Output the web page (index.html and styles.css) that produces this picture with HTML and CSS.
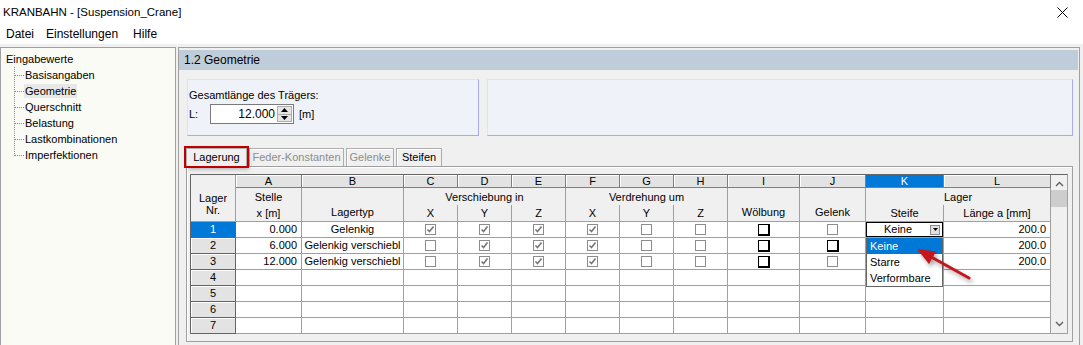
FILE: index.html
```html
<!DOCTYPE html>
<html lang="de">
<head>
  <meta charset="UTF-8" />
  <title>KRANBAHN - [Suspension_Crane]</title>
  <link rel="stylesheet" href="styles.css">
</head>
<body>
  <div class="titlebar">
    <span>KRANBAHN - [Suspension_Crane]</span>
    <svg class="close" width="11" height="11" viewBox="0 0 11 11"><path d="M0.5 0.5 L10.5 10.5 M10.5 0.5 L0.5 10.5" stroke="#000" stroke-width="1"/></svg>
  </div>
  <div class="menubar">
    <span>Datei</span>
    <span>Einstellungen</span>
    <span class="last">Hilfe</span>
  </div>

  <div class="main">
    <aside class="nav">
      <div class="tree-root">Eingabewerte</div>
      <ul class="tree">
        <li>Basisangaben</li>
        <li><span class="sel">Geometrie</span></li>
        <li>Querschnitt</li>
        <li>Belastung</li>
        <li>Lastkombinationen</li>
        <li>Imperfektionen</li>
      </ul>
    </aside>

    <section class="page">
      <div class="page-title">1.2 Geometrie</div>

      <div class="groups">
        <div class="group group-len">
          <div>Gesamtlänge des Trägers:</div>
          <div class="len-row">
            <span class="len-label">L:</span>
            <div class="spin">
              <span class="spin-val">12.000</span>
              <div class="spin-btns">
                <span class="sb"><svg width="7" height="4" viewBox="0 0 7 4"><path d="M0 4 L3.5 0 L7 4 Z" fill="#000"/></svg></span>
                <span class="sb"><svg width="7" height="4" viewBox="0 0 7 4"><path d="M0 0 L3.5 4 L7 0 Z" fill="#000"/></svg></span>
              </div>
            </div>
            <span>[m]</span>
          </div>
        </div>
        <div class="group group-info"></div>
      </div>

      <div class="tabs">
        <div class="tab active">Lagerung</div>
        <div class="tab disabled feder">Feder-Konstanten</div>
        <div class="tab disabled gelenke">Gelenke</div>
        <div class="tab steifen">Steifen</div>
      </div>

      <div class="tab-panel">
        <div class="sheet">
          <div class="grid">
            <!-- header -->
            <div class="c corner">Lager<br>Nr.</div>
            <div class="c let">A</div>
            <div class="c let">B</div>
            <div class="c let">C</div>
            <div class="c let">D</div>
            <div class="c let">E</div>
            <div class="c let">F</div>
            <div class="c let">G</div>
            <div class="c let">H</div>
            <div class="c let">I</div>
            <div class="c let">J</div>
            <div class="c let sel">K</div>
            <div class="c let">L</div>

            <div class="c hd open">Stelle</div>
            <div class="c hd tall">Lagertyp</div>
            <div class="c hd open span3">Verschiebung in</div>
            <div class="c hd open span3">Verdrehung um</div>
            <div class="c hd tall">Wölbung</div>
            <div class="c hd tall">Gelenk</div>
            <div class="c hd open span2">Lager</div>

            <div class="c hd">x [m]</div>
            <div class="c hd">X</div>
            <div class="c hd">Y</div>
            <div class="c hd">Z</div>
            <div class="c hd">X</div>
            <div class="c hd">Y</div>
            <div class="c hd">Z</div>
            <div class="c hd">Steife</div>
            <div class="c hd">Länge a [mm]</div>

            <!-- row 1 -->
            <div class="c rh sel">1</div>
            <div class="c num">0.000</div>
            <div class="c mid">Gelenkig</div>
            <div class="c mid"><span class="cb"><svg viewBox="0 0 9 9"><path d="M1.5 4.5 L3.5 6.5 L7.5 1.5" /></svg></span></div>
            <div class="c mid"><span class="cb"><svg viewBox="0 0 9 9"><path d="M1.5 4.5 L3.5 6.5 L7.5 1.5" /></svg></span></div>
            <div class="c mid"><span class="cb"><svg viewBox="0 0 9 9"><path d="M1.5 4.5 L3.5 6.5 L7.5 1.5" /></svg></span></div>
            <div class="c mid"><span class="cb"><svg viewBox="0 0 9 9"><path d="M1.5 4.5 L3.5 6.5 L7.5 1.5" /></svg></span></div>
            <div class="c mid"><span class="cb"></span></div>
            <div class="c mid"><span class="cb"></span></div>
            <div class="c mid"><span class="cb bold"></span></div>
            <div class="c mid"><span class="cb"></span></div>
            <div class="c combo">
              <span class="combo-val">Keine</span>
              <span class="combo-btn"><svg width="5" height="3" viewBox="0 0 5 3"><path d="M0 0 L5 0 L2.5 3 Z" fill="#000"/></svg></span>
            </div>
            <div class="c num">200.0</div>

            <!-- row 2 -->
            <div class="c rh">2</div>
            <div class="c num">6.000</div>
            <div class="c mid">Gelenkig verschiebl</div>
            <div class="c mid"><span class="cb"></span></div>
            <div class="c mid"><span class="cb"><svg viewBox="0 0 9 9"><path d="M1.5 4.5 L3.5 6.5 L7.5 1.5" /></svg></span></div>
            <div class="c mid"><span class="cb"><svg viewBox="0 0 9 9"><path d="M1.5 4.5 L3.5 6.5 L7.5 1.5" /></svg></span></div>
            <div class="c mid"><span class="cb"><svg viewBox="0 0 9 9"><path d="M1.5 4.5 L3.5 6.5 L7.5 1.5" /></svg></span></div>
            <div class="c mid"><span class="cb"></span></div>
            <div class="c mid"><span class="cb"></span></div>
            <div class="c mid"><span class="cb bold"></span></div>
            <div class="c mid"><span class="cb bold"></span></div>
            <div class="c"></div>
            <div class="c num">200.0</div>

            <!-- row 3 -->
            <div class="c rh">3</div>
            <div class="c num">12.000</div>
            <div class="c mid">Gelenkig verschiebl</div>
            <div class="c mid"><span class="cb"></span></div>
            <div class="c mid"><span class="cb"><svg viewBox="0 0 9 9"><path d="M1.5 4.5 L3.5 6.5 L7.5 1.5" /></svg></span></div>
            <div class="c mid"><span class="cb"><svg viewBox="0 0 9 9"><path d="M1.5 4.5 L3.5 6.5 L7.5 1.5" /></svg></span></div>
            <div class="c mid"><span class="cb"><svg viewBox="0 0 9 9"><path d="M1.5 4.5 L3.5 6.5 L7.5 1.5" /></svg></span></div>
            <div class="c mid"><span class="cb"></span></div>
            <div class="c mid"><span class="cb"></span></div>
            <div class="c mid"><span class="cb bold"></span></div>
            <div class="c mid"><span class="cb"></span></div>
            <div class="c"></div>
            <div class="c num">200.0</div>

            <!-- empty rows -->
            <div class="c rh">4</div>
            <div class="c"></div><div class="c"></div><div class="c"></div><div class="c"></div><div class="c"></div><div class="c"></div>
            <div class="c"></div><div class="c"></div><div class="c"></div><div class="c"></div><div class="c"></div><div class="c"></div>
            <div class="c rh">5</div>
            <div class="c"></div><div class="c"></div><div class="c"></div><div class="c"></div><div class="c"></div><div class="c"></div>
            <div class="c"></div><div class="c"></div><div class="c"></div><div class="c"></div><div class="c"></div><div class="c"></div>
            <div class="c rh">6</div>
            <div class="c"></div><div class="c"></div><div class="c"></div><div class="c"></div><div class="c"></div><div class="c"></div>
            <div class="c"></div><div class="c"></div><div class="c"></div><div class="c"></div><div class="c"></div><div class="c"></div>
            <div class="c rh">7</div>
            <div class="c"></div><div class="c"></div><div class="c"></div><div class="c"></div><div class="c"></div><div class="c"></div>
            <div class="c"></div><div class="c"></div><div class="c"></div><div class="c"></div><div class="c"></div><div class="c"></div>
          </div>

          <div class="vscroll">
            <svg class="sarrow" width="9" height="6" viewBox="0 0 9 6"><path d="M1 5 L4.5 1.5 L8 5" fill="none" stroke="#606060" stroke-width="1.4"/></svg>
            <div class="thumb"></div>
            <div class="track"></div>
            <svg class="sarrow" width="9" height="6" viewBox="0 0 9 6"><path d="M1 1 L4.5 4.5 L8 1" fill="none" stroke="#606060" stroke-width="1.4"/></svg>
          </div>

          <ul class="droplist">
            <li class="hl">Keine</li>
            <li>Starre</li>
            <li>Verformbare</li>
          </ul>

          <svg class="pointer" width="70" height="45" viewBox="0 0 70 45">
            <line x1="60" y1="38" x2="24" y2="18" stroke="#c4161c" stroke-width="3" stroke-linecap="round"/>
            <path d="M8 9 L27 11.5 L20 24 Z" fill="#c4161c"/>
          </svg>
        </div>
      </div>
    </section>
  </div>
</body>
</html>
```

FILE: styles.css
```css
* {
  box-sizing: border-box;
  margin: 0;
  padding: 0;
}

body {
  width: 1083px;
  height: 345px;
  overflow: hidden;
  background: #f0f0f0;
  font-family: 'Liberation Sans', Arial, sans-serif;
  font-size: 11px;
  color: #000;
}

.titlebar {
  height: 24px;
  background: #fff;
  display: flex;
  align-items: center;
  justify-content: space-between;
  padding: 0 15px 0 3px;
  font-size: 11.5px;
}

.menubar {
  height: 20px;
  background: #fff;
  display: flex;
  align-items: center;
  gap: 12px;
  padding-left: 6px;
  font-size: 12px;
}

.menubar .last {
  margin-left: 3px;
}

.main {
  display: flex;
  height: 301px;
  padding-top: 3px;
}

/* left tree */
.nav {
  width: 176px;
  background: #fbfbf5;
  border: 1px solid #a0a0a0;
  border-bottom: none;
  padding-top: 3px;
}

.tree-root {
  height: 16px;
  line-height: 16px;
  padding-left: 5px;
}

.tree {
  list-style: none;
}

.tree li {
  height: 16px;
  line-height: 16px;
  margin-left: 13px;
  padding-left: 11px;
  white-space: nowrap;
  background:
    repeating-linear-gradient(to bottom, #8a8a8a 0 1px, transparent 1px 2px) 0 0 / 1px 100% no-repeat,
    repeating-linear-gradient(to right, #8a8a8a 0 1px, transparent 1px 2px) 1px 8px / 10px 1px no-repeat;
}

.tree li:last-child {
  background:
    repeating-linear-gradient(to bottom, #8a8a8a 0 1px, transparent 1px 2px) 0 0 / 1px 9px no-repeat,
    repeating-linear-gradient(to right, #8a8a8a 0 1px, transparent 1px 2px) 1px 8px / 10px 1px no-repeat;
}

.tree .sel {
  background: #e8e8e8;
  padding: 1px 1px;
  margin-left: -1px;
}

/* right page */
.page {
  flex: 1;
  margin-left: 2px;
  margin-right: 3px;
  border: 1px solid #a0a0a0;
  border-bottom: none;
  padding: 2px 1px 0 0;
  display: flex;
  flex-direction: column;
}

.page-title {
  height: 20px;
  line-height: 20px;
  background: #bfcddb;
  padding-left: 5px;
  font-size: 12px;
}

.groups {
  display: flex;
  gap: 8px;
  margin: 9px 5px 0 8px;
  height: 57px;
}

.group {
  background: #eff3f9;
  border: 1px solid #dde4f0;
  border-right-color: #a9a9ec;
  border-bottom-color: #a9a9ec;
}

.group-len {
  width: 292px;
  padding: 8px 1px 0 1px;
  line-height: 14px;
}

.group-info {
  flex: 1;
}

.len-row {
  display: flex;
  align-items: center;
  margin-top: 2px;
}

.len-label {
  width: 21px;
}

.spin {
  width: 84px;
  height: 20px;
  background: #fff;
  border: 1px solid #7a7a7a;
  display: flex;
  align-items: center;
  padding: 0 1px 0 2px;
  margin-right: 5px;
}

.spin-val {
  flex: 1;
  text-align: right;
  padding-right: 2px;
  font-size: 12px;
}

.spin-btns {
  width: 15px;
  height: 16px;
  display: flex;
  flex-direction: column;
  border: 1px solid #adadad;
}

.sb {
  flex: 1;
  background: #e5e5e5;
  display: flex;
  align-items: center;
  justify-content: center;
}

.sb + .sb {
  border-top: 1px solid #adadad;
}

/* tabs */
.tabs {
  display: flex;
  margin: 12px 0 0 7px;
  height: 18px;
}

.tab {
  height: 18px;
  line-height: 17px;
  text-align: center;
  background: #f0f0f0;
  border: 1px solid #adadad;
  border-bottom: none;
  box-shadow: inset 1px 1px #fff;
  white-space: nowrap;
  margin-right: 2px;
}

.tab.active {
  width: 61px;
  margin-right: 2px;
  outline: 2px solid #c00000;
  box-shadow: 2px 3px 4px rgba(0, 0, 0, 0.3);
  position: relative;
  z-index: 2;
}

.tab.disabled {
  color: #8d8d8d;
}

.feder {
  width: 95px;
}

.gelenke {
  width: 48px;
}

.steifen {
  width: 46px;
}

.tab-panel {
  margin: 0 5px 0 7px;
  height: 176px;
  border: 1px solid #a0a0a0;
  box-shadow: inset 1px 1px #fff;
  padding: 7px 2px 0 3px;
}

/* spreadsheet */
.sheet {
  position: relative;
  display: flex;
  width: 878px;
  border-top: 1px solid #646464;
  border-left: 1px solid #646464;
  border-right: 1px solid #a0a0a0;
}

.grid {
  display: grid;
  grid-template-columns: 45px 66px 102px repeat(6, 54px) 72px 66px 78px 107px;
  grid-template-rows: 13px 17px 17px repeat(7, 16px);
}

.c {
  border-right: 1px solid #a0a0a0;
  border-bottom: 1px solid #a0a0a0;
  background: #fff;
  line-height: 15px;
  white-space: nowrap;
  overflow: hidden;
  display: flex;
  align-items: center;
}

.corner {
  grid-row: span 3;
  background: #f0f0f0;
  display: block;
  text-align: center;
  line-height: 12px;
  padding-top: 17px;
}

.let {
  background: #e3e3e3;
  border-right-color: #7f7f7f;
  border-bottom-color: #7f7f7f;
  box-shadow: inset 1px 1px #fff;
  justify-content: center;
  line-height: 12px;
}

.let.sel {
  background: #0078d7;
  color: #fff;
  box-shadow: none;
}

.hd {
  background: #f0f0f0;
  justify-content: center;
}

.hd.open {
  border-bottom: none;
  padding-top: 2px;
}

.hd.tall {
  grid-row: span 2;
  align-items: flex-end;
  padding-bottom: 1px;
}

.span2 {
  grid-column: span 2;
}

.span3 {
  grid-column: span 3;
}

.rh {
  background: #e3e3e3;
  border-right-color: #646464;
  border-bottom-color: #646464;
  box-shadow: inset 1px 1px #fff;
  justify-content: center;
}

.rh.sel {
  background: #0078d7;
  color: #fff;
  box-shadow: none;
}

.num {
  justify-content: flex-end;
  padding-right: 4px;
}

.mid {
  justify-content: center;
}

.cb {
  width: 11px;
  height: 11px;
  border: 1px solid #8c8c8c;
  background: #fff;
  display: flex;
}

.cb svg {
  width: 9px;
  height: 9px;
  fill: none;
  stroke: #777;
  stroke-width: 1.6;
}

.cb.bold {
  width: 12px;
  height: 12px;
  border: 1px solid #000;
  border-right-width: 2px;
  border-bottom-width: 2px;
}

.combo {
  box-shadow: inset 0 0 0 1px #000;
  padding-right: 3px;
}

.combo-val {
  flex: 1;
  text-align: center;
}

.combo-btn {
  width: 10px;
  height: 10px;
  background: #e1e1e1;
  border: 1px solid #8c8c8c;
  display: flex;
  align-items: center;
  justify-content: center;
}

/* scrollbar */
.vscroll {
  width: 16px;
  display: flex;
  flex-direction: column;
  align-items: center;
  background: #f0f0f0;
  border-bottom: 1px solid #a0a0a0;
}

.sarrow {
  margin: 6px 0 3px;
}

.vscroll .sarrow:last-child {
  margin: 3px 0 6px;
}

.thumb {
  width: 16px;
  height: 17px;
  background: #cdcdcd;
}

.track {
  flex: 1;
}

/* dropdown list over the grid */
.droplist {
  position: absolute;
  left: 675px;
  top: 63px;
  width: 77px;
  list-style: none;
  background: #fff;
  border: 1px solid #646464;
  border-top: none;
  z-index: 3;
}

.droplist li {
  height: 16px;
  line-height: 16px;
  padding-left: 3px;
}

.droplist .hl {
  background: #0078d7;
  color: #fff;
}

.pointer {
  position: absolute;
  left: 718px;
  top: 65px;
  z-index: 4;
  filter: drop-shadow(2px 3px 2px rgba(0, 0, 0, 0.35));
}
```
